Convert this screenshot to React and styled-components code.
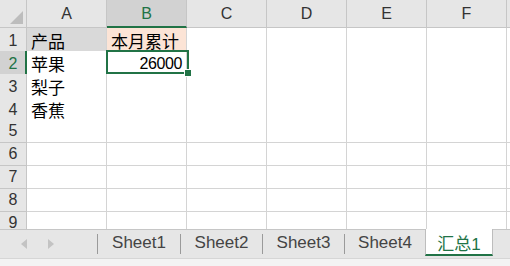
import React from "react";
import styled, { createGlobalStyle } from "styled-components";

const GREEN = "#217346";
const GRID = "#d4d4d4";
const HEAD_LINE = "#c6c6c6";

const GlobalStyle = createGlobalStyle`
  html, body {
    margin: 0;
    padding: 0;
    overflow: hidden;
    background: #fff;
  }
  body {
    font-family: "Liberation Sans", "Noto Sans CJK SC", sans-serif;
  }
`;

const Window = styled.div`
  width: 510px;
  height: 266px;
  display: flex;
  flex-direction: column;
  overflow: hidden;
`;

const Sheet = styled.div`
  position: relative;
  height: 229px;
  overflow: hidden;
  background: #fff;
`;

const Row = styled.div`
  display: grid;
  grid-template-columns: 27px repeat(7, 80px);
  height: ${p => p.h || 23}px;
`;

const Corner = styled.div`
  position: relative;
  background: #e6e6e6;
  border-right: 1px solid ${HEAD_LINE};
  border-bottom: 1px solid ${HEAD_LINE};
  box-sizing: border-box;
  overflow: hidden;

  svg {
    position: absolute;
    right: 3px;
    bottom: 3px;
  }
`;

const ColHead = styled.div`
  display: flex;
  align-items: center;
  justify-content: center;
  box-sizing: border-box;
  background: ${p => (p.active ? "#d2d2d2" : "#e6e6e6")};
  color: ${p => (p.active ? GREEN : "#333")};
  border-right: 1px solid ${HEAD_LINE};
  border-bottom: ${p => (p.active ? `2px solid ${GREEN}` : `1px solid ${HEAD_LINE}`)};
  font-size: 16px;
  padding-top: ${p => (p.active ? 1 : 0)}px;
`;

const RowHead = styled.div`
  display: flex;
  align-items: center;
  justify-content: center;
  box-sizing: border-box;
  background: ${p => (p.active ? "#d2d2d2" : "#e6e6e6")};
  color: ${p => (p.active ? GREEN : "#333")};
  border-right: ${p => (p.active ? `2px solid ${GREEN}` : `1px solid ${HEAD_LINE}`)};
  border-bottom: 1px solid ${HEAD_LINE};
  font-size: 16px;
  padding-left: ${p => (p.active ? 1 : 0)}px;
`;

const Cell = styled.div`
  display: flex;
  align-items: center;
  justify-content: ${p => (p.num ? "flex-end" : "flex-start")};
  box-sizing: border-box;
  padding: 0 ${p => (p.num ? 4 : 3)}px 0 ${p => (p.num ? 0 : 4)}px;
  background: ${p => p.fill || "#fff"};
  border-right: 1px solid ${GRID};
  border-bottom: 1px solid ${GRID};
  color: #000;
  font-size: ${p => (p.num ? 16 : 17)}px;
  letter-spacing: ${p => (p.num ? "-0.4px" : "0")};
  white-space: nowrap;
  overflow: visible;
`;

const Selection = styled.div`
  position: absolute;
  left: 106px;
  top: 50px;
  width: 83px;
  height: 24px;
  box-sizing: border-box;
  border: 2px solid ${GREEN};
  pointer-events: none;
`;

const FillHandle = styled.div`
  position: absolute;
  right: -5px;
  bottom: -5px;
  width: 6px;
  height: 6px;
  background: ${GREEN};
  border: 1px solid #fff;
`;

const TabBar = styled.div`
  display: flex;
  align-items: flex-start;
  height: 29px;
  box-sizing: border-box;
  background: #e6e6e6;
  border-top: 1px solid ${HEAD_LINE};
`;

const Nav = styled.div`
  width: 97px;
  height: 28px;
  display: flex;
  align-items: center;
  gap: 21px;
  padding-left: 21px;
  box-sizing: border-box;
`;

const Sep = styled.div`
  width: 1px;
  height: 20px;
  margin-top: 4px;
  background: #9a9a9a;
`;

const Tab = styled.div`
  width: ${p => p.w}px;
  height: 26px;
  display: flex;
  align-items: center;
  justify-content: center;
  font-size: 17px;
  color: #444;
  box-sizing: border-box;
`;

const ActiveTab = styled(Tab)`
  margin-top: -1px;
  height: 27px;
  background: #fff;
  color: ${GREEN};
  border-left: 1px solid #bdbdbd;
  border-right: 1px solid #bdbdbd;
  border-bottom: 2px solid ${GREEN};
  padding-top: 1px;
`;

const StatusStrip = styled.div`
  flex: 1;
  background: #f3f3f3;
  border-top: 1px solid #d6d6d6;
`;

const cols = ["A", "B", "C", "D", "E", "F", ""];

const data = {
  1: [{ v: "产品", fill: "#d9d9d9" }, { v: "本月累计", fill: "#fce4d6" }],
  2: [{ v: "苹果" }, { v: "26000", num: true }],
  3: [{ v: "梨子" }],
  4: [{ v: "香蕉" }]
};

const Arrow = ({ dir }) => (
  <svg width="6" height="10" viewBox="0 0 6 10">
    <polygon
      points={dir === "left" ? "6,0 6,10 0,5" : "0,0 0,10 6,5"}
      fill="#c3c3c3"
    />
  </svg>
);

export default function App() {
  const rows = [1, 2, 3, 4, 5, 6, 7, 8, 9];
  return (
    <>
      <GlobalStyle />
      <Window>
        <Sheet>
          <Row h={28}>
            <Corner>
              <svg width="13" height="13" viewBox="0 0 13 13">
                <polygon points="13,0 13,13 0,13" fill="#bdbdbd" />
              </svg>
            </Corner>
            {cols.map((c, i) => (
              <ColHead key={i} active={c === "B"}>
                {c}
              </ColHead>
            ))}
          </Row>
          {rows.map(r => {
            const cells = data[r] || [];
            return (
              <Row key={r}>
                <RowHead active={r === 2}>{r}</RowHead>
                {cols.map((c, i) => {
                  const cell = cells[i] || {};
                  return (
                    <Cell key={i} fill={cell.fill} num={cell.num}>
                      {cell.v}
                    </Cell>
                  );
                })}
              </Row>
            );
          })}
          <Selection>
            <FillHandle />
          </Selection>
        </Sheet>
        <TabBar>
          <Nav>
            <Arrow dir="left" />
            <Arrow dir="right" />
          </Nav>
          <Sep />
          <Tab w={82}>Sheet1</Tab>
          <Sep />
          <Tab w={81}>Sheet2</Tab>
          <Sep />
          <Tab w={81}>Sheet3</Tab>
          <Sep />
          <Tab w={80}>Sheet4</Tab>
          <ActiveTab w={68}>汇总1</ActiveTab>
        </TabBar>
        <StatusStrip />
      </Window>
    </>
  );
}
